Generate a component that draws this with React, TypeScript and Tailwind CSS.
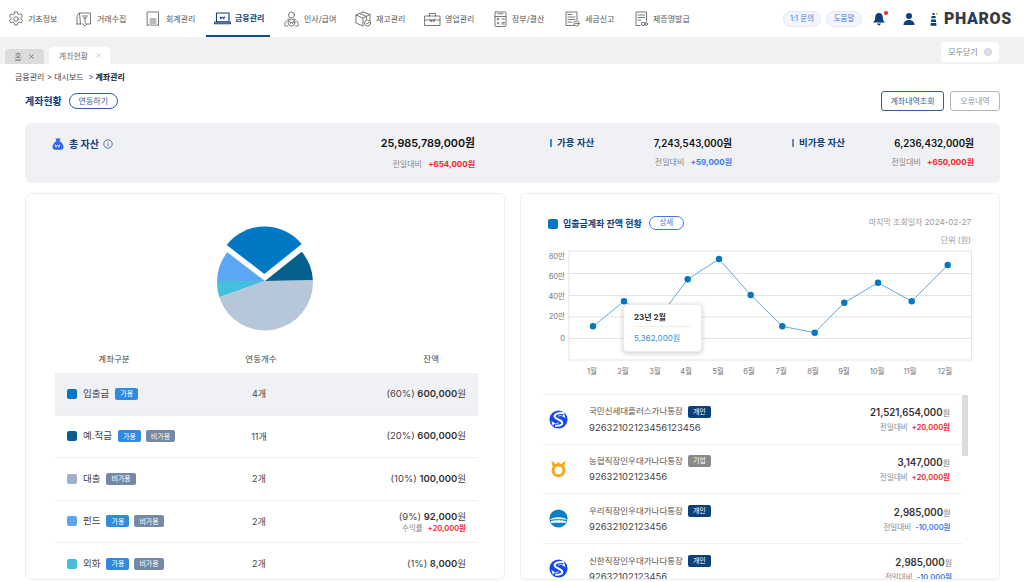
import React from "react";
import { X } from "lucide-react";

const ic = { fill: "none", stroke: "currentColor", strokeWidth: 0.8, strokeLinecap: "round" as const, strokeLinejoin: "round" as const };

const Gear = () => (
  <svg viewBox="0 0 16 16" className="w-[16px] h-[16px]" {...ic}>
    <path d="M6.6 1h2.8l.4 2 1.4.7 1.9-.8 1.4 2.4-1.6 1.3v1.6l1.6 1.3-1.4 2.4-1.9-.8-1.4.8-.4 2H6.6l-.4-2-1.4-.8-1.9.8-1.4-2.4 1.6-1.3V6.6L1.5 5.3l1.4-2.4 1.9.8 1.4-.7z" />
    <circle cx="8" cy="8" r="2.3" />
  </svg>
);
const Collect = () => (
  <svg viewBox="0 0 16 16" className="w-[16px] h-[16px]" {...ic}>
    <path d="M1 13V5l2-3h11.500v11h-4" />
    <path d="M1 13h3.500M3.500 2.500 4.500 13" />
    <path d="M6.500 5h5M7.500 7h3M9 7v4.500l1.500 2-1.800 1.500-2-2.500" />
  </svg>
);
const Ledger = () => (
  <svg viewBox="0 0 16 16" className="w-[16px] h-[16px]" {...ic}>
    <path d="M2.500 1h11v13.500l-1.400-.8-1.400.8-1.300-.8-1.400.8-1.400-.8-1.300.8-1.400-.8-1.400.8z" />
    <path d="M5 8h6M5 10h6M5 12h6" />
  </svg>
);
const Laptop = () => (
  <svg viewBox="0 0 17 16" className="w-[17px] h-[16px]" fill="none" stroke="currentColor" strokeWidth="1.100" strokeLinejoin="round">
    <path d="M2.500 3h12.500v9H2.500z" />
    <path d="M.7 12h15.600l.3 1.800H.5z" />
    <path d="M6 6.500l.8 2.700.9-2h1.100l.9 2 .8-2.700M5.800 7.600h5.400" strokeWidth="0.800" />
  </svg>
);
const Person = () => (
  <svg viewBox="0 0 17 16" className="w-[17px] h-[16px]" {...ic}>
    <circle cx="8.500" cy="4" r="3" />
    <path d="M4.500 15H2c-1-1 0-5 4-7.200M12.500 15H15c1-1 0-5-4-7.200" />
    <circle cx="8.500" cy="11.500" r="3.500" />
    <path d="M6.800 10.400l.7 2.200.9-1.500h.3l.9 1.500.7-2.200" />
  </svg>
);
const Box = () => (
  <svg viewBox="0 0 17 16" className="w-[17px] h-[16px]" {...ic}>
    <path d="M8 1 15 3.500v6M8 1 1 4v8l7 3M1 4l7 3v8M8 7l7-3.500M4.500 2.500l7 3v2.500" />
    <circle cx="12.500" cy="12" r="3" />
    <path d="M11.300 12l1 1 1.500-1.800" />
  </svg>
);
const Case = () => (
  <svg viewBox="0 0 17 16" className="w-[17px] h-[16px]" {...ic}>
    <path d="M1 5h15v9.500H1zM5.500 5V2.500h6V5M1 9h3.500M12.500 9H16" />
    <path d="M5.800 8l1 3 1-2h1l1 2 1-3M5.500 9h6" />
  </svg>
);
const Calc = () => (
  <svg viewBox="0 0 13 16" className="w-[13px] h-[16px]" {...ic}>
    <rect x="1" y="1" width="11" height="14.500" rx=".8" />
    <path d="M1 5.500h11M4 2.800h5M3 8h2M4 7v2M8 8h2.500M3.200 11.500l1.600 1.500M4.800 11.500 3.200 13M8 11.500h2.500M8 13h2.500" />
  </svg>
);
const Tax = () => (
  <svg viewBox="0 0 15 16" className="w-[15px] h-[16px]" {...ic}>
    <path d="M9 14.500H1V1h11v8" />
    <path d="M3 3.500h4M3 6h7M3 8.500h7M3 11h4" />
    <circle cx="11.500" cy="12.500" r="2.500" />
    <path d="M10.500 12.500h2" />
  </svg>
);
const Cert = () => (
  <svg viewBox="0 0 13 16" className="w-[13px] h-[16px]" {...ic}>
    <path d="M5 14.500H1V1h10.500v9" />
    <path d="M3 4h6.500M3 6.500h6.500M3 9h3" />
    <circle cx="8" cy="13" r="1.700" />
    <circle cx="11" cy="13" r="1.400" />
  </svg>
);

const nav = [
  { label: "기초정보", icon: <Gear />, cls: "w-[69px] pl-[8px] gap-[4px]" },
  { label: "거래수집", icon: <Collect />, cls: "w-[70px] pl-[7px] gap-[5px]" },
  { label: "회계관리", icon: <Ledger />, cls: "w-[67px] pl-[6px] gap-[5px]" },
  { label: "금융관리", icon: <Laptop />, cls: "w-[64px] pl-[8px] gap-[4px] h-full border-b-2 border-[#0f4c8a] text-[#0f3f7c] font-bold mr-[13px]" },
  { label: "인사/급여", icon: <Person />, cls: "w-[72px] gap-[4px]" },
  { label: "재고관리", icon: <Box />, cls: "w-[69px] gap-[4px]" },
  { label: "영업관리", icon: <Case />, cls: "w-[70px] gap-[4px]" },
  { label: "장부/결산", icon: <Calc />, cls: "w-[71px] gap-[5px]" },
  { label: "세금신고", icon: <Tax />, cls: "w-[70px] gap-[5px]" },
  { label: "제증명발급", icon: <Cert />, cls: "w-[60px] gap-[5px]" },
];

const Ga = () => <span className="h-[12px] px-[5px] rounded-[2px] bg-[#2f8ae0] text-white text-[7px] flex items-center leading-none">가용</span>;
const Bi = () => <span className="h-[12px] px-[5px] rounded-[2px] bg-[#7688a8] text-white text-[7px] flex items-center leading-none">비가용</span>;

const rows = [
  { color: "bg-[#0277c4]", name: "입출금", badges: [<Ga key="a" />], count: "4개", pct: "(60%)", amt: "600,000", bg: "bg-[#f0f1f5]" },
  { color: "bg-[#05608f]", name: "예.적금", badges: [<Ga key="a" />, <Bi key="b" />], count: "11개", pct: "(20%)", amt: "600,000", bg: "" },
  { color: "bg-[#9fb1c6]", name: "대출", badges: [<Bi key="b" />], count: "2개", pct: "(10%)", amt: "100,000", bg: "" },
  { color: "bg-[#5ba6f5]", name: "펀드", badges: [<Ga key="a" />, <Bi key="b" />], count: "2개", pct: "(9%)", amt: "92,000", bg: "", sub: true },
  { color: "bg-[#45c0dc]", name: "외화", badges: [<Ga key="a" />, <Bi key="b" />], count: "2개", pct: "(1%)", amt: "8,000", bg: "" },
];

const Shinhan = () => (
  <svg viewBox="0 0 20 20" className="w-[19px] h-[19px]">
    <circle cx="10" cy="10" r="9.500" fill="#1249e8" />
    <path d="M16 3.500C11 2.500 5.500 3.500 6 7c.5 3 7.500 3 8 6.500.3 2-3 3.500-7.500 3" fill="none" stroke="#fff" strokeWidth="2.200" />
    <path d="M2.500 11.500l4 2.500-2.500 2.500zM17.500 8.500l-4-2 2.500-2.500z" fill="#fff" />
    <path d="M9.500 6.500l4-1M6.500 14.500l4-1" stroke="#fff" strokeWidth=".8" />
  </svg>
);
const Nh = () => (
  <svg viewBox="0 0 20 20" className="w-[19px] h-[19px]">
    <circle cx="10" cy="12" r="5.700" fill="none" stroke="#f7a81b" strokeWidth="3.200" />
    <path d="M2.500 1.500 8 6 6 8 3.500 7zM17.500 1.500 12 6l2 2 2.500-1zM10 3l2 2.500L10 7.500 8 5.500z" fill="#f7a81b" />
  </svg>
);
const Woori = () => (
  <svg viewBox="0 0 20 20" className="w-[19px] h-[19px]">
    <circle cx="10" cy="10" r="9.500" fill="#0d7fc2" />
    <path d="M.5 12C3 7.500 17 7.500 19.500 12c-3-1.500-16-1.500-19 0z" fill="#e8f6fd" />
    <path d="M2 14.500h16v-1.800C14 11.500 6 11.500 2 12.700z" fill="#fff" />
  </svg>
);

const accounts = [
  { icon: <Shinhan />, name: "국민신세대플러스가나통장", tag: "개인", num: "92632102123456123456", amt: "21,521,654,000", delta: "+20,000원", up: true, h: "h-[49.5px]", pr: "pr-[12px]" },
  { icon: <Nh />, name: "농협직장인우대가나다통장", tag: "기업", num: "92632102123456", amt: "3,147,000", delta: "+20,000원", up: true, h: "h-[49.5px]", pr: "pr-[12px]" },
  { icon: <Woori />, name: "우리직장인우대가나다통장", tag: "개인", num: "92632102123456", amt: "2,985,000", delta: "-10,000원", up: false, h: "h-[50px]", pr: "pr-[11.5px]" },
  { icon: <Shinhan />, name: "신한직장인우대가나다통장", tag: "개인", num: "92632102123456", amt: "2,985,000", delta: "-10,000원", up: false, h: "h-[50px]", pr: "pr-[10px]" },
];

const pts: [number, number][] = [
  [593, 326.3], [624, 301.3], [655.7, 322], [687.7, 279.3], [719, 259], [750.7, 295],
  [782.3, 326.3], [814.7, 332.7], [844.3, 302.7], [878, 282.7], [911.7, 301.3], [947.7, 265],
];
const xl: [string, number][] = [
  ["1월", 592], ["2월", 623], ["3월", 655], ["4월", 686], ["5월", 718], ["6월", 749],
  ["7월", 781], ["8월", 813], ["9월", 844], ["10월", 877], ["11월", 910], ["12월", 945],
];
const yl: [string, number][] = [["80만", 259], ["60만", 279], ["40만", 299], ["20만", 319], ["0", 341]];

export default function App() {
  return (
    <div className="w-[1024px] h-[582px] overflow-hidden bg-white font-[Inter,'Noto_Sans_CJK_KR',sans-serif] text-[#333] flex flex-col">
      {/* top nav */}
      <header className="h-[37px] shrink-0 flex items-center text-[8px] text-[#555]">
        <nav className="flex items-center h-full w-[760px]">
          {nav.map((n) => (
            <div key={n.label} className={`flex items-center shrink-0 whitespace-nowrap ${n.cls}`}>
              {n.icon}
              <span>{n.label}</span>
            </div>
          ))}
        </nav>
        <div className="flex items-center ml-[23px]">
          <span className="h-[16px] w-[38px] rounded-full bg-[#f2f5fd] border border-[#e4e8f2] text-[#3f79e0] text-[7.500px] flex items-center justify-center">1:1 문의</span>
          <span className="h-[16px] w-[36px] ml-[5px] rounded-full bg-[#f2f5fd] border border-[#e4e8f2] text-[#3f79e0] text-[7.500px] flex items-center justify-center">도움말</span>
          <div className="relative ml-[10px]">
            <svg viewBox="0 0 14 14" className="w-[14px] h-[14px]" fill="#0d3f7d">
              <path d="M7 1c2.500 0 3.800 2 3.800 4.500 0 2.500 1 3.800 2.200 5H1c1.200-1.200 2.200-2.500 2.200-5C3.200 3 4.500 1 7 1zM5.300 11.500h3.400c0 1-.7 1.800-1.700 1.800s-1.700-.8-1.700-1.800z" />
            </svg>
            <span className="absolute top-[-1px] right-[-2px] w-[4px] h-[4px] rounded-full bg-[#f5222d]" />
          </div>
          <svg viewBox="0 0 14 14" className="w-[14px] h-[14px] ml-[16px]" fill="#0d3f7d">
            <circle cx="7" cy="4" r="3" />
            <path d="M1.500 13c0-3.500 2.500-5 5.500-5s5.500 1.500 5.500 5z" />
          </svg>
          <svg viewBox="0 0 8 14" className="w-[8px] h-[14px] ml-[14px]">
            <path d="M2.500 1h2v2h-2z" fill="#0d3f7d" />
            <path d="M1.500 4h4l.2 2.200h-4.400zM1.200 7.500h4.600l.3 2.500H1zM.8 11h5.400l.3 2.800H.5z" fill="#0d3f7d" />
            <circle cx="6.800" cy="1.800" r="1" fill="#f59a23" />
          </svg>
          <span className="ml-[6px] text-[16px] font-black tracking-[0.6px] text-[#3a3a3a] leading-none font-['Roboto',sans-serif]">PH<span className="text-[#1d3f73]">A</span>ROS</span>
        </div>
      </header>

      {/* tab bar */}
      <div className="h-[27px] shrink-0 bg-[#f1f1f2] flex items-end pl-[5px] pr-[25px] text-[8px]">
        <div className="h-[15px] w-[39px] bg-[#dcdcdc] rounded-t-[4px] flex items-center justify-center gap-[6px] text-[#777]">
          홈 <X className="w-[7px] h-[7px] text-[#555]" strokeWidth={2.500} />
        </div>
        <div className="h-[17px] w-[61px] ml-[5px] pl-[2px] bg-white rounded-t-[4px] flex items-center justify-center gap-[7px] text-[#777]">
          계좌현황 <X className="w-[7px] h-[7px] text-[#aaa]" strokeWidth={2} />
        </div>
        <div className="ml-auto mb-[2px] h-[20px] w-[58px] bg-white rounded-[4px] flex items-center justify-center gap-[6px] text-[#888]">
          모두닫기
          <span className="w-[8px] h-[8px] rounded-full bg-[#d5d8df] flex items-center justify-center">
            <X className="w-[5px] h-[5px] text-white" strokeWidth={3} />
          </span>
        </div>
      </div>

      {/* breadcrumb */}
      <div className="h-[24px] shrink-0 pl-[15px] flex items-center text-[8px] text-[#444] pt-[1px]">
        금융관리 &gt; 대시보드&nbsp; &gt; <b className="ml-[2px] text-[#222]">계좌관리</b>
      </div>

      {/* title */}
      <div className="shrink-0 h-[26px] pl-[25px] pr-[24px] flex items-center">
        <h1 className="text-[10px] font-bold text-[#0f3f7c]">계좌현황</h1>
        <span className="ml-[7px] w-[49px] h-[16px] rounded-full border border-[#2f5f9e] text-[#2f5f9e] text-[8px] flex items-center justify-center">연동하기</span>
        <span className="ml-auto w-[63px] h-[20px] rounded-[3px] border border-[#2f5f9e] text-[#2f5f9e] text-[8px] flex items-center justify-center">계좌내역조회</span>
        <span className="ml-[6px] w-[50px] h-[20px] rounded-[3px] border border-[#b5b5b5] text-[#999] text-[8px] flex items-center justify-center">오류내역</span>
      </div>

      <main className="pr-[24px] pl-[25px] flex flex-col gap-[10px] mt-[9px]">
        {/* summary */}
        <section className="h-[60px] rounded-[6px] bg-[#f0f1f5] pl-[27px] flex shrink-0">
          <div className="w-[423px] flex justify-between pt-[15px]">
            <div className="flex items-center h-[12px] gap-[5px]">
              <svg viewBox="0 0 12 12" className="w-[12px] h-[12px]">
                <path d="M3.500.5h5L7.500 3c2 1 4 3.500 4 6 0 2-1 2.700-2.500 2.700H3C1.500 11.700.5 11 .5 9c0-2.500 2-5 4-6z" fill="#3467ee" />
                <path d="M3.200 6.500l.9 2.700.9-2h1l.9 2 .9-2.700" fill="none" stroke="#fff" strokeWidth=".8" />
              </svg>
              <span className="text-[10px] font-bold text-[#0f3f7c]">총 자산</span>
              <svg viewBox="0 0 10 10" className="w-[10px] h-[10px] ml-[-1px]" fill="none" stroke="#0f3f7c" strokeWidth=".7">
                <circle cx="5" cy="5" r="4.200" />
                <path d="M5 4.300v3M5 2.600v.8" />
              </svg>
            </div>
            <div className="flex flex-col items-end">
              <span className="text-[10.800px] font-semibold text-[#111] h-[12px] leading-[12px]">25,985,789,000원</span>
              <span className="text-[8px] text-[#888] mt-[8px]">전일대비 <b className="ml-[4px] text-[#f5222d]">+654,000원</b></span>
            </div>
          </div>
          <div className="w-[182px] ml-[75px] flex justify-between pt-[14px]">
            <div className="flex items-center h-[12px] gap-[5px]">
              <span className="w-[2px] h-[8px] bg-[#2f8ae0]" />
              <span className="text-[9.500px] font-bold text-[#0f3f7c]">가용 자산</span>
            </div>
            <div className="flex flex-col items-end pt-[1px]">
              <span className="text-[9.700px] font-semibold text-[#111] h-[12px] leading-[12px]">7,243,543,000원</span>
              <span className="text-[8px] text-[#888] mt-[6px]">전일대비 <b className="ml-[4px] text-[#3f79f0]">+59,000원</b></span>
            </div>
          </div>
          <div className="w-[182px] ml-[60px] flex justify-between pt-[14px]">
            <div className="flex items-center h-[12px] gap-[5px]">
              <span className="w-[2px] h-[8px] bg-[#7688a8]" />
              <span className="text-[9.500px] font-bold text-[#0f3f7c]">비가용 자산</span>
            </div>
            <div className="flex flex-col items-end pt-[1px]">
              <span className="text-[9.700px] font-semibold text-[#111] h-[12px] leading-[12px]">6,236,432,000원</span>
              <span className="text-[8px] text-[#888] mt-[6px]">전일대비 <b className="ml-[4px] text-[#f5222d]">+650,000원</b></span>
            </div>
          </div>
        </section>

        <div className="flex gap-[15px] h-[387px]">
          {/* left card */}
          <section className="w-[480px] h-full rounded-[6px] border border-[#eceef2] overflow-hidden pt-[31px] pl-[29px] pr-[26px]">
            <svg viewBox="215 225 100 106" className="block w-[100px] h-[106px] mx-auto relative left-[-1.500px]">
              <path d="M265 281L227.300 252.300A48 48 0 0 0 217 281Z" fill="#5ba6f5" />
              <path d="M265 281L217 281A48 48 0 0 0 219.300 297.300Z" fill="#45c0dc" />
              <path d="M265 281L219.300 297.300A48 48 0 0 0 312.900 280Z" fill="#b6c7da" />
              <path d="M265 281L301.700 251.700A48 48 0 0 1 312.900 280Z" fill="#05608f" />
              <path d="M264.300 274L226.700 245A48 48 0 0 1 301.700 244Z" fill="#0277c4" />
            </svg>
            <div className="mt-[17px] pb-[2px] grid grid-cols-[148px_116px_159px] h-[25px] items-center text-[8.500px] text-[#444]">
              <span className="w-[118px] text-center">계좌구분</span>
              <span className="text-center">연동개수</span>
              <span className="text-right pr-[39px]">잔액</span>
            </div>
            {rows.map((r) => (
              <div key={r.name} className={`grid grid-cols-[146px_116px_161px] h-[42.500px] items-center border-b border-[#eeeff2] ${r.bg}`}>
                <div className="flex items-center pl-[12px] whitespace-nowrap">
                  <span className={`w-[10px] h-[10px] rounded-[2px] ${r.color}`} />
                  <span className="ml-[6px] text-[9.500px] text-[#444]">{r.name}</span>
                  <span className="flex gap-[5px] ml-[6px]">{r.badges}</span>
                </div>
                <span className="text-center text-[9px] text-[#444]">{r.count}</span>
                <div className="flex flex-col items-end pr-[12px]">
                  <span className="text-[9.500px] text-[#444]">{r.pct} <b className="font-semibold text-[#333]">{r.amt}</b>원</span>
                  {r.sub && <span className="text-[7.500px] text-[#888] leading-[9px]">수익률 <b className="ml-[3px] text-[#f5222d] font-semibold">+20,000원</b></span>}
                </div>
              </div>
            ))}
          </section>

          {/* right card */}
          <section className="w-[480px] h-full rounded-[6px] border border-[#eceef2] overflow-hidden relative">
            <div className="flex items-start pt-[22px] pl-[27px] pr-[28px] h-[31px]">
              <span className="w-[10px] h-[10px] rounded-[2px] bg-[#0277c4] mt-[3px]" />
              <span className="ml-[5px] text-[9px] font-bold text-[#0f3f7c] leading-[16px]">입출금계좌 잔액 현황</span>
              <span className="ml-[7px] w-[35px] h-[14px] rounded-full border border-[#3f79e0] text-[#3f79e0] text-[7.500px] flex items-center justify-center">상세</span>
              <span className="ml-auto text-[8px] text-[#999] leading-[12px]">마지막 조회일자 2024-02-27</span>
            </div>
            <div className="text-right pr-[28px] text-[8px] text-[#999] mt-[9px] leading-[12px]">단위 (원)</div>
            <div className="relative mt-[2px] ml-[24px] w-[430px] h-[130px]">
              <svg viewBox="545 248 430 130" className="block w-[430px] h-[130px]">
                <rect x="569" y="251" width="402.500" height="109" fill="none" stroke="#e4e4e4" strokeWidth="1" />
                {[273.5, 295.5, 317, 338.5].map((y) => (
                  <line key={y} x1="569" x2="971.500" y1={y} y2={y} stroke="#e4e4e4" strokeWidth="1" />
                ))}
                <polyline points={pts.map((p) => p.join(",")).join(" ")} fill="none" stroke="#3a94d0" strokeWidth=".8" />
                {pts.map((p, i) => (
                  <circle key={i} cx={p[0]} cy={p[1]} r="3.200" fill="#0277c4" />
                ))}
                {yl.map(([t, y]) => (
                  <text key={t} x="565" y={y} textAnchor="end" fontSize="7.500" fill="#777">{t}</text>
                ))}
                {xl.map(([t, x]) => (
                  <text key={t} x={x} y="374" textAnchor="middle" fontSize="7.500" fill="#777">{t}</text>
                ))}
              </svg>
              <div className="absolute left-[78px] top-[56px] w-[79px] h-[48px] bg-white rounded-[4px] border border-[#ececec] shadow-[0_1px_5px_rgba(0,0,0,0.22)] px-[10px] pt-[7px]">
                <div className="text-[8px] font-bold text-[#333] leading-[11px] pb-[3px] border-b border-[#eee]">23년 2월</div>
                <div className="text-[8px] text-[#2f8fd0] mt-[6px] leading-[11px]">5,362,000원</div>
              </div>
            </div>
            <div className="absolute right-[31px] top-[201px] w-[6px] h-[61px] bg-[#dcdcdc]" />
            <div className="ml-[22px] mr-[37px] mt-[16px] border-t border-[#eeeff2]">
              {accounts.map((a, i) => (
                <div key={i} className={`${a.h} pt-[2px] shrink-0 border-b border-[#eeeff2] flex items-center`}>
                  <div className="w-[46px] pl-[6px] flex items-center mb-[2px]">{a.icon}</div>
                  <div className="flex flex-col mb-[2px]">
                    <div className="flex items-center h-[14px]">
                      <span className="text-[8.500px] text-[#555]">{a.name}</span>
                      <span className={`ml-[5px] w-[23px] h-[12px] rounded-[2px] text-white text-[7px] flex items-center justify-center ${a.tag === "기업" ? "bg-[#8a8a8a]" : "bg-[#0d3f7d]"}`}>{a.tag}</span>
                    </div>
                    <span className="text-[9.500px] text-[#444] mt-[3px] leading-[12px]">{a.num}</span>
                  </div>
                  <div className={`ml-auto flex flex-col items-end ${a.pr}`}>
                    <span className="text-[9.700px] text-[#777] leading-[14px]"><b className="font-semibold text-[#333]">{a.amt}</b><span className="text-[8px]">원</span></span>
                    <span className="text-[7.500px] text-[#888] mt-[2px] leading-[12px]">전일대비 <b className={`ml-[2px] font-semibold ${a.up ? "text-[#f5222d]" : "text-[#3f79f0]"}`}>{a.delta}</b></span>
                  </div>
                </div>
              ))}
            </div>
          </section>
        </div>
      </main>
    </div>
  );
}
